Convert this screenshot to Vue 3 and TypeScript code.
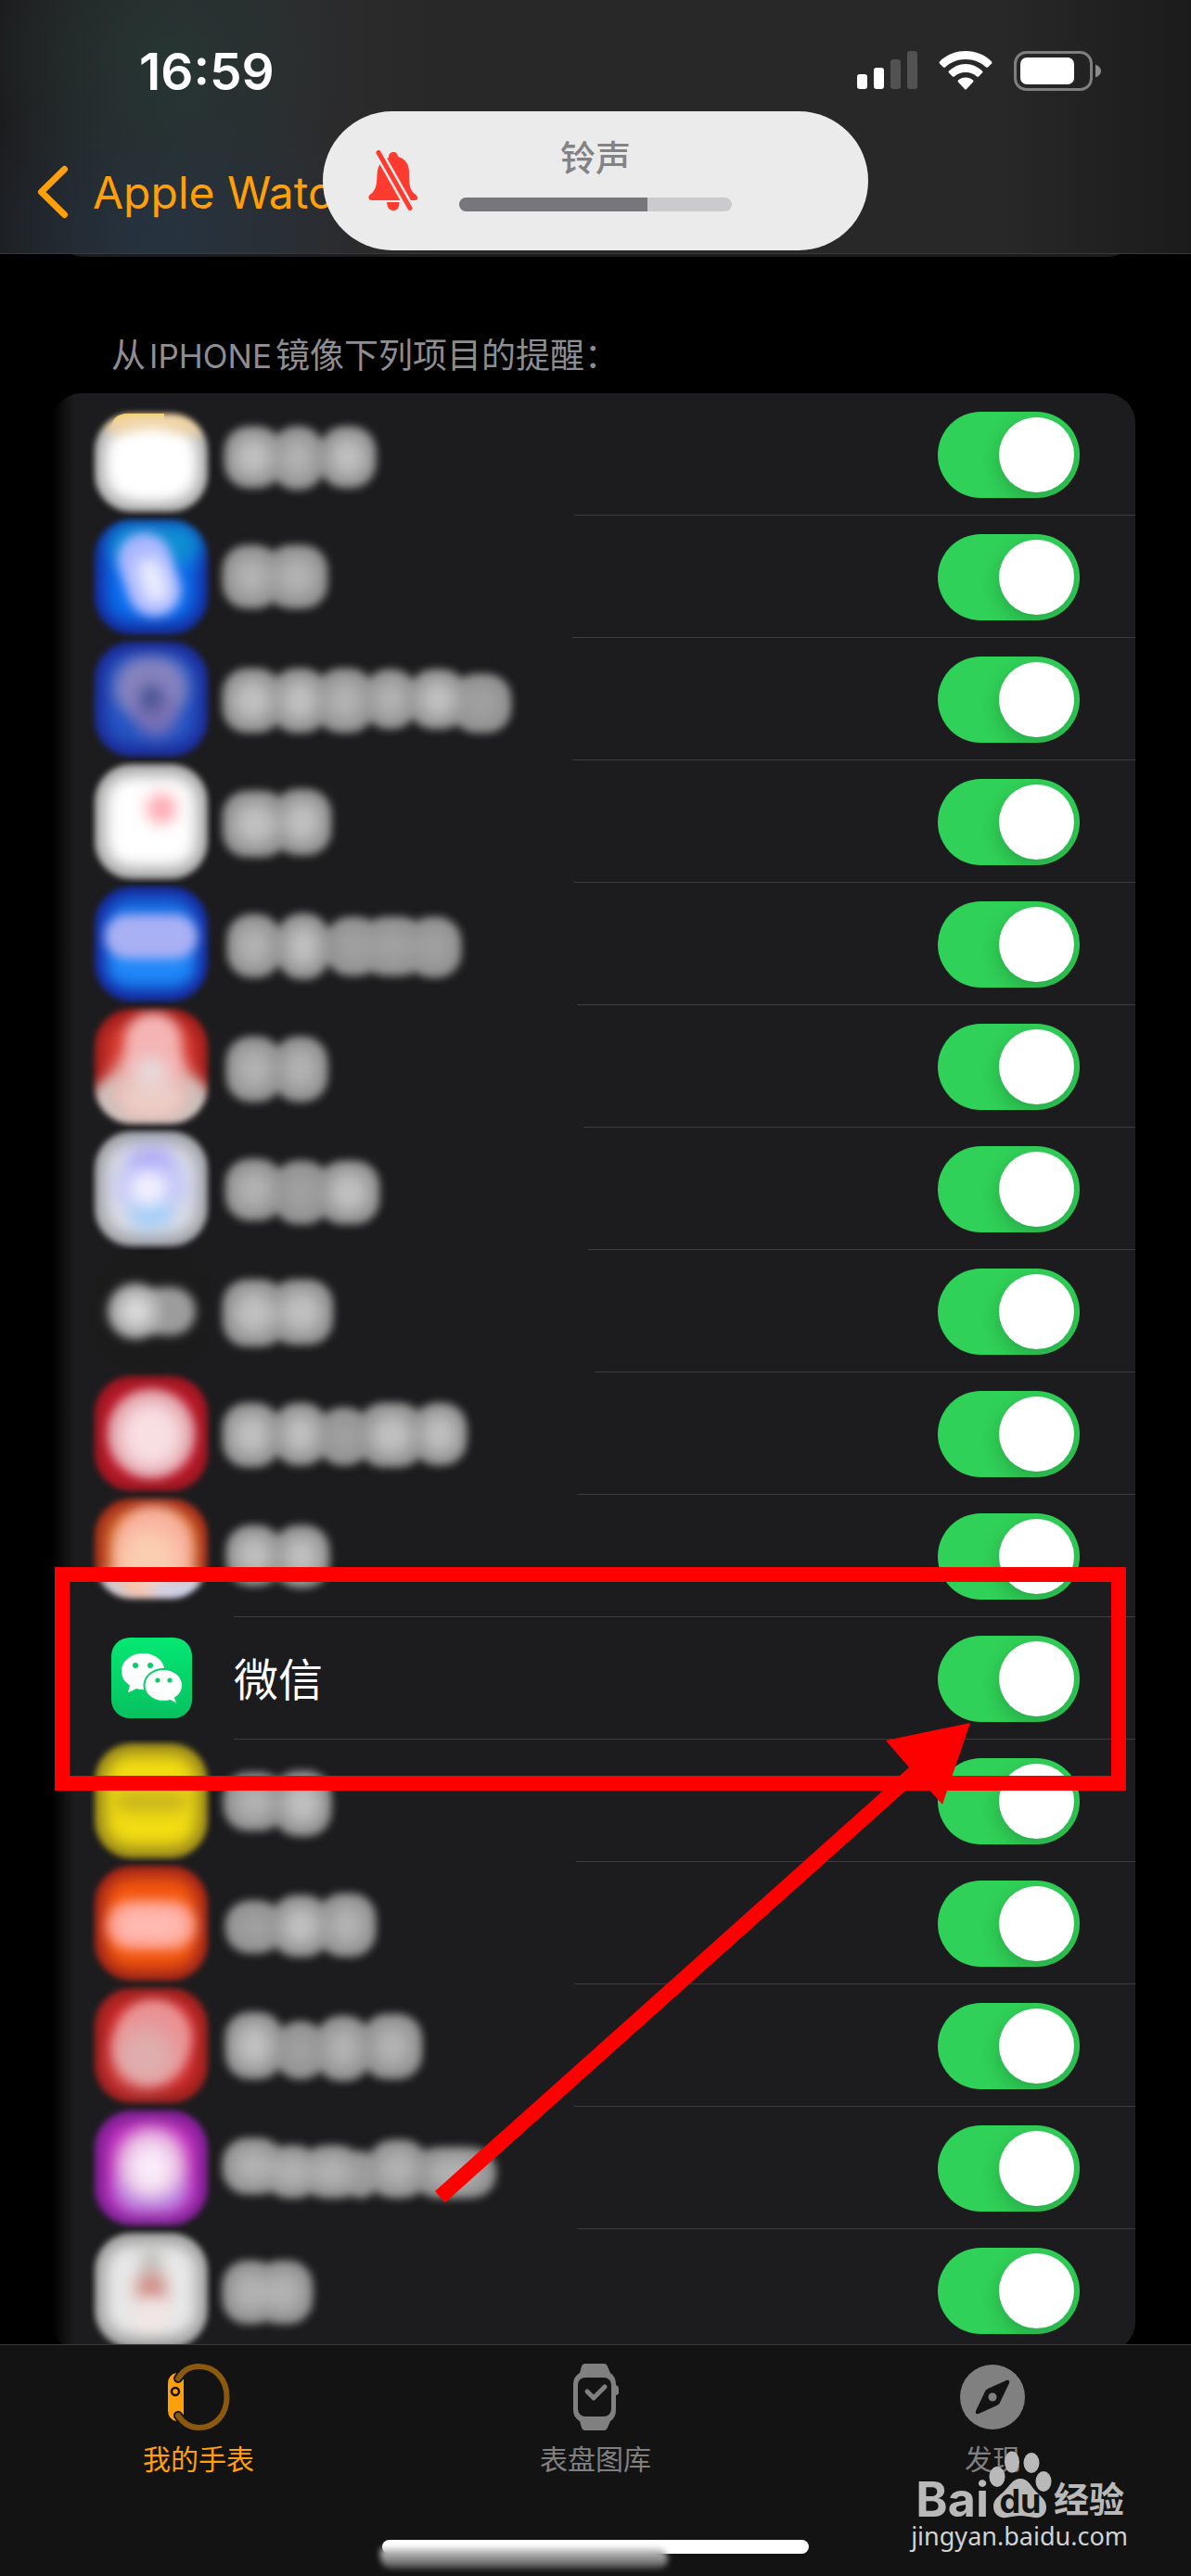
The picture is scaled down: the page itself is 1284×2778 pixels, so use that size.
<script setup lang="ts">
import { ref } from 'vue'

type Shape = { cx: number; cy: number; rx: number; ry: number; fill: string; soft: number; turn?: number }
type Blob = [x: number, width: number, top: number, bottom: number, tone: string]
interface AppRow {
  id: number
  name?: string
  on: boolean
  line: number
  top?: number
  bottom?: number
  outer?: string
  inner?: string
  shapes?: Shape[]
  blobs?: Blob[]
}

const hi = '#c0c0c0'
const mid = '#b2b2b2'
const low = '#a0a0a0'

const rows = ref<AppRow[]>([
  { id: 1, on: true, line: 563, top: 22, outer: '#a8a8a8', inner: '#ffffff',
    shapes: [
      { cx: 74, cy: 30, rx: 60, ry: 14, fill: '#f0d4a4', soft: 6 },
      { cx: 66, cy: 76, rx: 40, ry: 36, fill: '#ffffff', soft: 8 },
    ],
    blobs: [[13, 62, 36, 102, hi], [64, 56, 36, 104, mid], [116, 60, 36, 102, hi]] },
  { id: 2, on: true, line: 561, outer: '#152a9c', inner: '#0a6cec',
    shapes: [
      { cx: 70, cy: 30, rx: 50, ry: 22, fill: '#0e8ed2', soft: 9 },
      { cx: 64, cy: 64, rx: 29, ry: 46, fill: '#a9b6ff', soft: 5, turn: -18 },
      { cx: 68, cy: 70, rx: 14, ry: 26, fill: '#eceeff', soft: 8, turn: -18 },
    ],
    blobs: [[11, 62, 32, 100, mid], [58, 66, 32, 100, mid]] },
  { id: 3, on: true, line: 561, outer: '#1b2a96', inner: '#2455c4',
    shapes: [
      { cx: 66, cy: 54, rx: 40, ry: 34, fill: '#8583be', soft: 7 },
      { cx: 71, cy: 82, rx: 22, ry: 24, fill: '#7a70b4', soft: 8 },
      { cx: 66, cy: 65, rx: 11, ry: 14, fill: '#4a5490', soft: 7 },
    ],
    blobs: [[11, 64, 33, 102, hi], [64, 60, 33, 102, hi], [112, 62, 33, 102, mid], [164, 56, 34, 98, mid], [212, 62, 34, 98, hi], [258, 64, 39, 102, low]] },
  { id: 4, on: true, line: 563, outer: '#a3a3a3', inner: '#ffffff',
    shapes: [{ cx: 77, cy: 52, rx: 16, ry: 16, fill: '#ffa4ae', soft: 8 }],
    blobs: [[11, 70, 33, 104, hi], [66, 62, 31, 102, hi]] },
  { id: 5, on: true, line: 566, outer: '#17279a', inner: '#1470e8',
    shapes: [
      { cx: 66, cy: 88, rx: 44, ry: 18, fill: '#2288f8', soft: 7 },
      { cx: 66, cy: 58, rx: 50, ry: 24, fill: '#a9b0f4', soft: 5 },
    ],
    blobs: [[16, 58, 34, 102, mid], [70, 56, 33, 104, hi], [122, 60, 37, 100, low], [160, 70, 37, 100, low], [210, 58, 37, 102, low]] },
  { id: 6, on: true, line: 573, outer: '#9c1c1a', inner: '#d83a30',
    shapes: [
      { cx: 66, cy: 108, rx: 66, ry: 32, fill: '#c8c0bc', soft: 6 },
      { cx: 66, cy: 86, rx: 44, ry: 36, fill: '#e6b6b2', soft: 8 },
      { cx: 68, cy: 50, rx: 31, ry: 42, fill: '#f4b4b4', soft: 6 },
      { cx: 66, cy: 100, rx: 34, ry: 20, fill: '#eccdc6', soft: 8 },
      { cx: 66, cy: 72, rx: 18, ry: 16, fill: '#e6dada', soft: 8 },
    ],
    blobs: [[15, 60, 34, 104, mid], [66, 58, 34, 104, mid]] },
  { id: 7, on: true, line: 578, outer: '#9c9ea4', inner: '#dddfe6',
    shapes: [
      { cx: 66, cy: 40, rx: 26, ry: 20, fill: '#aeaaf8', soft: 9 },
      { cx: 66, cy: 64, rx: 40, ry: 22, fill: '#c2c6fa', soft: 10 },
      { cx: 66, cy: 92, rx: 24, ry: 18, fill: '#a6cef8', soft: 8 },
      { cx: 63, cy: 66, rx: 20, ry: 18, fill: '#f2f0ff', soft: 8 },
    ],
    blobs: [[14, 62, 34, 100, mid], [66, 60, 36, 104, low], [114, 66, 36, 104, hi]] },
  { id: 8, on: true, line: 585, outer: '#1c1c1c', inner: '#1b1b1b',
    shapes: [
      { cx: 84, cy: 66, rx: 30, ry: 26, fill: '#9c9c9c', soft: 4 },
      { cx: 49, cy: 66, rx: 30, ry: 30, fill: '#a6a6a6', soft: 4 },
      { cx: 50, cy: 66, rx: 18, ry: 18, fill: '#dadada', soft: 8 },
    ],
    blobs: [[11, 68, 32, 104, hi], [62, 68, 32, 102, hi]] },
  { id: 9, on: true, line: 567, outer: '#9a1620', inner: '#c81c30',
    shapes: [
      { cx: 66, cy: 66, rx: 47, ry: 48, fill: '#e0a0a8', soft: 4 },
      { cx: 66, cy: 68, rx: 34, ry: 36, fill: '#f8dfe2', soft: 9 },
    ],
    blobs: [[11, 62, 33, 102, hi], [66, 58, 33, 100, hi], [114, 56, 38, 100, low], [158, 70, 33, 102, hi], [216, 58, 33, 100, hi]] },
  { id: 10, on: true, line: 196, bottom: 112, outer: '#a02a1c', inner: '#d46a20',
    shapes: [
      { cx: 66, cy: 112, rx: 66, ry: 30, fill: '#ccccd4', soft: 6 },
      { cx: 68, cy: 62, rx: 44, ry: 50, fill: '#f9b3a0', soft: 6 },
      { cx: 64, cy: 74, rx: 30, ry: 36, fill: '#fbceb0', soft: 9 },
      { cx: 90, cy: 104, rx: 26, ry: 12, fill: '#ccd2ec', soft: 8 },
    ],
    blobs: [[15, 60, 33, 98, hi], [66, 60, 33, 100, hi]] },
  { id: 11, on: true, line: 196, name: '微信' },
  { id: 12, on: true, line: 565, outer: '#96851c', inner: '#f2dc12',
    shapes: [{ cx: 66, cy: 66, rx: 40, ry: 12, fill: '#c9b61c', soft: 8 }],
    blobs: [[12, 66, 36, 98, mid], [66, 62, 34, 104, hi]] },
  { id: 13, on: true, line: 563, outer: '#9c221a', inner: '#f4570c',
    shapes: [
      { cx: 66, cy: 68, rx: 48, ry: 26, fill: '#ff9a88', soft: 6 },
      { cx: 66, cy: 68, rx: 38, ry: 18, fill: '#ffbab2', soft: 8 },
    ],
    blobs: [[14, 62, 42, 98, low], [64, 62, 36, 102, hi], [114, 62, 34, 102, mid]] },
  { id: 14, on: true, line: 563, outer: '#98201e', inner: '#d42c2c',
    shapes: [
      { cx: 67, cy: 62, rx: 42, ry: 46, fill: '#ea9294', soft: 5, turn: 18 },
      { cx: 60, cy: 78, rx: 32, ry: 32, fill: '#dfadad', soft: 10 },
    ],
    blobs: [[14, 62, 30, 102, hi], [68, 54, 40, 102, low], [112, 58, 34, 104, mid], [162, 64, 32, 102, mid]] },
  { id: 15, on: true, line: 567, outer: '#7a1f90', inner: '#c42cc0',
    shapes: [
      { cx: 66, cy: 88, rx: 40, ry: 26, fill: '#b888e0', soft: 8 },
      { cx: 66, cy: 60, rx: 38, ry: 38, fill: '#e4b0dc', soft: 8 },
      { cx: 66, cy: 66, rx: 24, ry: 28, fill: '#faecfa', soft: 10 },
    ],
    blobs: [[11, 66, 34, 94, mid], [56, 60, 42, 98, mid], [96, 66, 42, 98, mid], [140, 40, 48, 98, low], [168, 64, 36, 98, mid], [216, 90, 44, 98, mid]] },
  { id: 16, on: true, line: 0, outer: '#9c9c9c', inner: '#e8e8e8',
    shapes: [
      { cx: 66, cy: 36, rx: 10, ry: 18, fill: '#bebebc', soft: 8 },
      { cx: 66, cy: 64, rx: 16, ry: 18, fill: '#d08c84', soft: 8 },
      { cx: 66, cy: 92, rx: 20, ry: 18, fill: '#f2e6e4', soft: 8 },
    ],
    blobs: [[11, 60, 34, 102, mid], [46, 62, 34, 102, mid]] },
])

const tileTop = (row: AppRow) => row.top ?? 4
const tileHeight = (row: AppRow) => (row.bottom ?? 128) - tileTop(row)

const volume = 69
</script>

<template>
  <div class="screen">
    <header class="top">
      <div class="status">
        <time class="clock">16:59</time>
        <div class="signals">
          <svg width="65" height="42" viewBox="0 0 65 42" aria-hidden="true">
            <rect x="0" y="25" width="11" height="16" rx="3" fill="#fff" />
            <rect x="18" y="18" width="11" height="23" rx="3" fill="#fff" />
            <rect x="36" y="9" width="11" height="32" rx="3" fill="#525252" />
            <rect x="54" y="0" width="11" height="41" rx="3" fill="#525252" />
          </svg>
          <svg width="58" height="42" viewBox="0 0 58 42" fill="#fff" aria-hidden="true">
            <path d="M29 0C18 0 8 4 1 11.500Q0 12.500 1 13.500L5 17.500Q6 18 7 17.500C13 12 20 9 29 9S45 12 51 17.500Q52 18 53 17.500L57 13.500Q58 12.500 57 11.500C50 4 40 0 29 0Z" />
            <path d="M29 14C22 14 16 17 11 21.500Q10 22.500 11 23.500L15 27.500Q16 28 17 27.500C20 24.500 24 23 29 23S38 24.500 41 27.500Q42 28 43 27.500L47 23.500Q48 22.500 47 21.500C42 17 36 14 29 14Z" />
            <path d="M29 28.500C26 28.500 23 29.500 21 31.500Q20 32.500 21 33.500L28 41Q29 42 30 41L37 33.500Q38 32.500 37 31.500C35 29.500 32 28.500 29 28.500Z" />
          </svg>
          <svg width="95" height="43" viewBox="0 0 95 43" aria-hidden="true">
            <rect x="1.500" y="1.500" width="82" height="40" rx="12" fill="none" stroke="#7f7f7f" stroke-width="3" />
            <rect x="7" y="7" width="58" height="29" rx="7" fill="#fff" />
            <path d="M88 14.500Q94 17 94 21.500T88 28.500Z" fill="#8c8c8c" />
          </svg>
        </div>
      </div>
      <nav class="navbar">
        <a href="#back" class="back">
          <svg width="34" height="58" viewBox="0 0 34 58" fill="none" stroke="#ff9f0a" stroke-width="7" stroke-linecap="round" stroke-linejoin="round" aria-hidden="true">
            <path d="M29.500 4.500L4.500 29L29.500 53.500" />
          </svg>
          <span>Apple Watch</span>
        </a>
      </nav>
      <div class="hud" role="status">
        <svg class="bell" width="54" height="66" viewBox="0 0 54 66" aria-hidden="true">
          <path fill="#ff3b30" d="M22 8C22 4 24 2 27 2S32 4 32 7C40 9 44 15 44 24C44 38 45 43 50 47C53 49 53.500 51 53 53Q52 54 50 54H4Q1 54 0.500 52Q0 49 3 47C8 43 9 38 9.500 28C9.500 18 13 11 22 8Z" />
          <path fill="#ff3b30" d="M20 56H33.500Q33.500 65 27 65T20 56Z" />
          <path d="M11 2.500L45 62.500" stroke="#ebebeb" stroke-width="10" />
          <path d="M11 2.500L45 62.500" stroke="#ff3b30" stroke-width="5" stroke-linecap="round" />
        </svg>
        <div class="hud-body">
          <span class="hud-title">铃声</span>
          <div class="meter"><div class="meter-fill" :style="{ width: volume + '%' }"></div></div>
        </div>
      </div>
    </header>

    <main class="content">
      <div class="previous"></div>
      <h2 class="section">从<span class="device">IPHONE</span>镜像下列项目的提醒：</h2>
      <div class="card">
        <label v-for="row in rows" :key="row.id" class="row" :class="{ marked: row.name }">
          <svg v-if="row.name" class="icon" viewBox="0 0 132 132" aria-hidden="true">
            <defs>
              <linearGradient id="chat" x1="0" y1="0" x2="0" y2="1">
                <stop offset="0" stop-color="#04e873" />
                <stop offset="1" stop-color="#07c160" />
              </linearGradient>
            </defs>
            <rect x="23" y="22" width="87" height="87" rx="20" fill="url(#chat)" />
            <path fill="#fff" d="M57.500 39C44 39 34 47.500 34 58.500C34 65 37.500 70 43 73.500L41 80.500Q41.500 81.500 43 80.500L50 77Q54 78.500 60 78C67 77 80.500 69 80.500 58.500C80.500 47 70 39 57.500 39Z" />
            <path fill="#fff" stroke="#06d268" stroke-width="2" d="M79.500 56C68 56 58.500 63.500 58.500 73.500S68 91 79.500 91Q83 91 86.500 90L92 93Q94 93 93.500 91L92 87Q100 82 100 73.500C100 63.500 91 56 79.500 56Z" />
            <g fill="#06cf68">
              <circle cx="49" cy="52" r="3" /><circle cx="65" cy="52" r="3" />
              <circle cx="73" cy="68" r="2.600" /><circle cx="86" cy="68" r="2.600" />
            </g>
          </svg>
          <svg v-else class="icon" viewBox="0 0 132 132" aria-hidden="true">
            <clipPath :id="`tile-${row.id}`">
              <rect x="5" :y="tileTop(row)" width="122" :height="tileHeight(row)" rx="40" />
            </clipPath>
            <path v-if="row.id === 1" fill="#ffd52e" d="M23 46V40Q23 22 41 22H80V46Z" />
            <g class="tile">
              <g :clip-path="`url(#tile-${row.id})`">
                <rect x="0" y="0" width="132" height="132" :fill="row.outer" />
                <rect class="tile-core" x="16" :y="tileTop(row) + 12" width="100" :height="tileHeight(row) - 24" rx="28" :fill="row.inner" />
                <rect
                  v-for="(s, i) in row.shapes"
                  :key="i"
                  :x="s.cx - s.rx" :y="s.cy - s.ry" :width="s.rx * 2" :height="s.ry * 2"
                  :rx="Math.min(s.rx, s.ry)"
                  :fill="s.fill"
                  :transform="`rotate(${s.turn ?? 0} ${s.cx} ${s.cy})`"
                  :style="{ filter: `blur(${s.soft}px)` }"
                />
              </g>
            </g>
          </svg>
          <span v-if="row.name" class="name">{{ row.name }}</span>
          <svg v-else class="smudge" width="340" height="132" viewBox="0 0 340 132" aria-hidden="true">
            <g class="haze">
              <rect v-for="(b, i) in row.blobs" :key="i" :x="b[0]" :y="b[2]" :width="b[1]" :height="b[3] - b[2]" rx="26" fill="#909090" />
            </g>
            <g class="glow">
              <ellipse v-for="(b, i) in row.blobs" :key="i" :cx="b[0] + b[1] / 2" :cy="(b[2] + b[3]) / 2" :rx="b[1] / 3" :ry="(b[3] - b[2]) / 3" :fill="b[4]" />
            </g>
          </svg>
          <input v-model="row.on" type="checkbox" role="switch" class="switch" :aria-label="row.name ?? `App ${row.id}`" />
          <i v-if="row.line" class="line" :style="{ left: row.line + 'px' }"></i>
          <template v-if="row.name">
            <i class="frame"></i>
            <svg class="arrow" width="577" height="518" viewBox="0 0 577 518" aria-hidden="true">
              <path fill="#ff0000" d="M577 0L486 19L511 48L0 505L10.500 517.500L522 60L547 88Z" />
            </svg>
          </template>
        </label>
      </div>
    </main>

    <footer class="tabs">
      <nav class="tab-list">
        <a href="#watch" class="tab active">
          <svg width="72" height="74" viewBox="0 0 72 74" aria-hidden="true">
            <path fill="#ff9f0a" d="M12 11Q3 13 3 23V51Q3 61 12 63Q12 57 20 56V18Q12 17 12 11Z" />
            <path d="M14 17C20 7 27 4 36 4C54 4 66.500 18 66.500 37S54 70 36 70C27 70 20 66 14 57" fill="none" stroke="#131313" stroke-width="10" stroke-linecap="round" />
            <path d="M3 24V50H20V24Z" fill="#ff9f0a" />
            <path d="M14 17C20 7 27 4 36 4C54 4 66.500 18 66.500 37S54 70 36 70C27 70 20 66 14 57" fill="none" stroke="#8a590d" stroke-width="6" stroke-linecap="round" />
            <circle cx="11" cy="31" r="4" fill="#ff9f0a" stroke="#131313" stroke-width="2.500" />
          </svg>
          <span>我的手表</span>
        </a>
        <a href="#faces" class="tab">
          <svg width="72" height="74" viewBox="0 0 72 74" aria-hidden="true">
            <path fill="#808080" d="M25 1H45Q48 1 49 4L52 11Q58 15 58 23V24Q61 25 61 28V32Q61 35 58 35V51Q58 59 52 63L49 70Q48 73 45 73H25Q22 73 21 70L19 63Q12 59 12 51V23Q12 15 19 11L21 4Q22 1 25 1Z" />
            <rect x="17" y="16" width="36" height="42" rx="8" fill="#131313" />
            <path d="M27 31L34 38L46 26" fill="none" stroke="#808080" stroke-width="5" stroke-linecap="round" stroke-linejoin="round" />
          </svg>
          <span>表盘图库</span>
        </a>
        <a href="#discover" class="tab">
          <svg width="72" height="74" viewBox="0 0 72 74" aria-hidden="true">
            <circle cx="36" cy="37" r="35" fill="#808080" />
            <path fill="#131313" d="M51 19Q55 18 54 22L44 43Q43 45 41 46L21 55Q17 56 18 52L28 31Q29 29 31 28Z" />
            <circle cx="36" cy="37" r="4.500" fill="#808080" />
          </svg>
          <span>发现</span>
        </a>
      </nav>
      <div class="home"><i class="home-bar"></i><i class="home-smear"></i></div>
      <div class="mark">
        <div class="mark-logo">
          <span class="mark-latin">Bai</span>
          <span class="paw">
            <svg width="68" height="74" viewBox="0 0 68 74" fill="#b9b9b9" aria-hidden="true">
              <ellipse cx="9" cy="29" rx="8.500" ry="11" />
              <ellipse cx="25" cy="13" rx="8" ry="11.500" />
              <ellipse cx="46" cy="14" rx="8.500" ry="11" />
              <ellipse cx="59" cy="34" rx="8.500" ry="11" />
              <path d="M34 31C42 31 45 38 50 44C57 51 62 54 62 62C62 70 56 74 49 73C43 72 39 71 34 71S25 72 19 73C11 74 5 69 5 61C5 53 11 50 17 44C23 38 26 31 34 31Z" />
            </svg>
            <span class="paw-text">du</span>
          </span>
          <span class="mark-cjk">经验</span>
        </div>
        <span class="mark-url">jingyan.baidu.com</span>
      </div>
    </footer>
  </div>
</template>

<style>
body {
  background: #000;
}
</style>

<style scoped>
* {
  box-sizing: border-box;
}
.screen {
  display: flex;
  flex-direction: column;
  height: 100vh;
  background: #000;
  color: #fff;
  font-family: Inter, "Noto Sans CJK SC", sans-serif;
  overflow: hidden;
}
.top {
  position: relative;
  z-index: 1;
  flex: none;
  height: 274px;
  border-bottom: 1px solid #3a3a3c;
  background:
    radial-gradient(ellipse 200px 170px at 175px 60px, rgba(38, 54, 51, 0.9), transparent),
    radial-gradient(ellipse 220px 180px at 170px 250px, rgba(37, 52, 66, 0.9), transparent),
    linear-gradient(to right, #1b1b1c 0, #2b2c2e 200px, #2c2c2e 320px, #282828 480px, #282828 84%, #1b1b1b 100%);
}
.status {
  display: flex;
  justify-content: space-between;
  align-items: center;
  height: 152px;
  padding: 0 96px 0 150px;
}
.clock {
  padding-top: 2px;
  font-size: 55px;
  font-weight: 600;
  line-height: 66px;
}
.signals {
  display: flex;
  align-items: center;
  gap: 23px;
}
.navbar {
  padding: 22px 0 0 40px;
}
.back {
  display: flex;
  align-items: center;
  gap: 26px;
  height: 66px;
  color: #ff9f0a;
  font-size: 48px;
  text-decoration: none;
}
.hud {
  position: absolute;
  left: 50%;
  top: 120px;
  display: flex;
  width: 588px;
  height: 150px;
  margin-left: -294px;
  padding: 0 147px 0 49px;
  border-radius: 75px;
  background: #ebebeb;
}
.bell {
  flex: none;
  margin-top: 42px;
}
.hud-body {
  flex: 1;
  display: flex;
  flex-direction: column;
  align-items: center;
  margin-left: 44px;
  padding-top: 28px;
}
.hud-title {
  color: #838385;
  font-size: 38px;
  font-weight: 500;
  line-height: 44px;
}
.meter {
  width: 100%;
  height: 15px;
  margin-top: 21px;
  border-radius: 8px;
  background: #cbcbcd;
  overflow: hidden;
}
.meter-fill {
  height: 100%;
  background: #77767b;
}
.content {
  flex: 1;
  min-height: 0;
  overflow: hidden;
}
.previous {
  height: 60px;
  margin: -57px 60px 0;
  border-radius: 30px;
  background: #1c1c1e;
}
.section {
  margin: 81px 0 14px 120px;
  color: #8d8d93;
  font-size: 37px;
  font-weight: 400;
  line-height: 52px;
}
.device {
  margin: 0 4px;
  font-size: 35px;
}
.card {
  margin: 0 60px 0 56px;
  border-radius: 32px;
  background: linear-gradient(to right, #000, #1c1c1e 24px);
}
.row {
  position: relative;
  display: flex;
  align-items: center;
  height: 132px;
  padding: 0 60px 0 41px;
}
.icon {
  flex: none;
  width: 132px;
  height: 132px;
}
.tile {
  filter: blur(3px);
}
.tile-core {
  filter: blur(8px);
}
.smudge {
  flex: none;
}
.haze {
  filter: blur(5px);
}
.glow {
  filter: blur(9px);
}
.name {
  margin-left: 23px;
  padding-top: 4px;
  font-size: 48px;
  line-height: 72px;
}
.switch {
  appearance: none;
  flex: none;
  width: 153px;
  height: 93px;
  margin: 0 0 0 auto;
  padding: 6px;
  border-radius: 47px;
  background: #39393d;
  overflow: hidden;
}
.switch::before {
  content: "";
  display: block;
  width: 81px;
  height: 81px;
  border-radius: 50%;
  background: #fff;
  box-shadow: 0 8px 22px rgba(0, 0, 0, 0.2);
}
.switch:checked {
  background: #30d158;
}
.switch:checked::before {
  margin-left: auto;
}
.line {
  position: absolute;
  right: 0;
  bottom: 0;
  height: 1px;
  background: #3d3d40;
}
.marked {
  z-index: 1;
}
.frame {
  position: absolute;
  inset: -54px 10px -55px 3px;
  border: 16px solid #ff0000;
}
.arrow {
  position: absolute;
  top: 114px;
  right: 178px;
}
.tabs {
  position: relative;
  z-index: 2;
  flex: none;
  height: 250px;
  border-top: 1px solid #3a3a3c;
  background: #131313;
}
.tab-list {
  display: flex;
  padding-top: 19px;
}
.tab {
  flex: 1;
  display: flex;
  flex-direction: column;
  align-items: center;
  gap: 10px;
  color: #808080;
  font-size: 30px;
  line-height: 40px;
  text-decoration: none;
}
.active {
  color: #ff9f0a;
}
.home {
  position: absolute;
  left: 50%;
  bottom: 4px;
  width: 460px;
  height: 36px;
  margin-left: -230px;
}
.home-bar {
  display: block;
  height: 15px;
  margin-top: 1px;
  border-radius: 8px;
  background: #fff;
}
.home-smear {
  position: absolute;
  left: -2px;
  top: 10px;
  width: 310px;
  height: 22px;
  border-radius: 4px 20px 16px 20px;
  background: linear-gradient(#d0d0d0, #a0a0a0 40%, #4a4a4a);
  filter: blur(3px);
}
.mark {
  position: absolute;
  right: 68px;
  bottom: 24px;
  display: flex;
  flex-direction: column;
  align-items: flex-end;
}
.mark-logo {
  display: flex;
  align-items: flex-end;
  color: #b9b9b9;
  font-weight: 700;
}
.mark-latin {
  font-size: 52px;
  line-height: 40px;
}
.paw {
  position: relative;
  display: flex;
}
.paw-text {
  position: absolute;
  inset: auto 0 0;
  color: #131313;
  font-size: 36px;
  line-height: 38px;
  text-align: center;
}
.mark-cjk {
  margin: 0 4px 0 2px;
  font-size: 38px;
  line-height: 42px;
}
.mark-url {
  color: #d2d2d2;
  font-family: "Noto Sans", sans-serif;
  font-size: 27px;
  line-height: 38px;
}
</style>
